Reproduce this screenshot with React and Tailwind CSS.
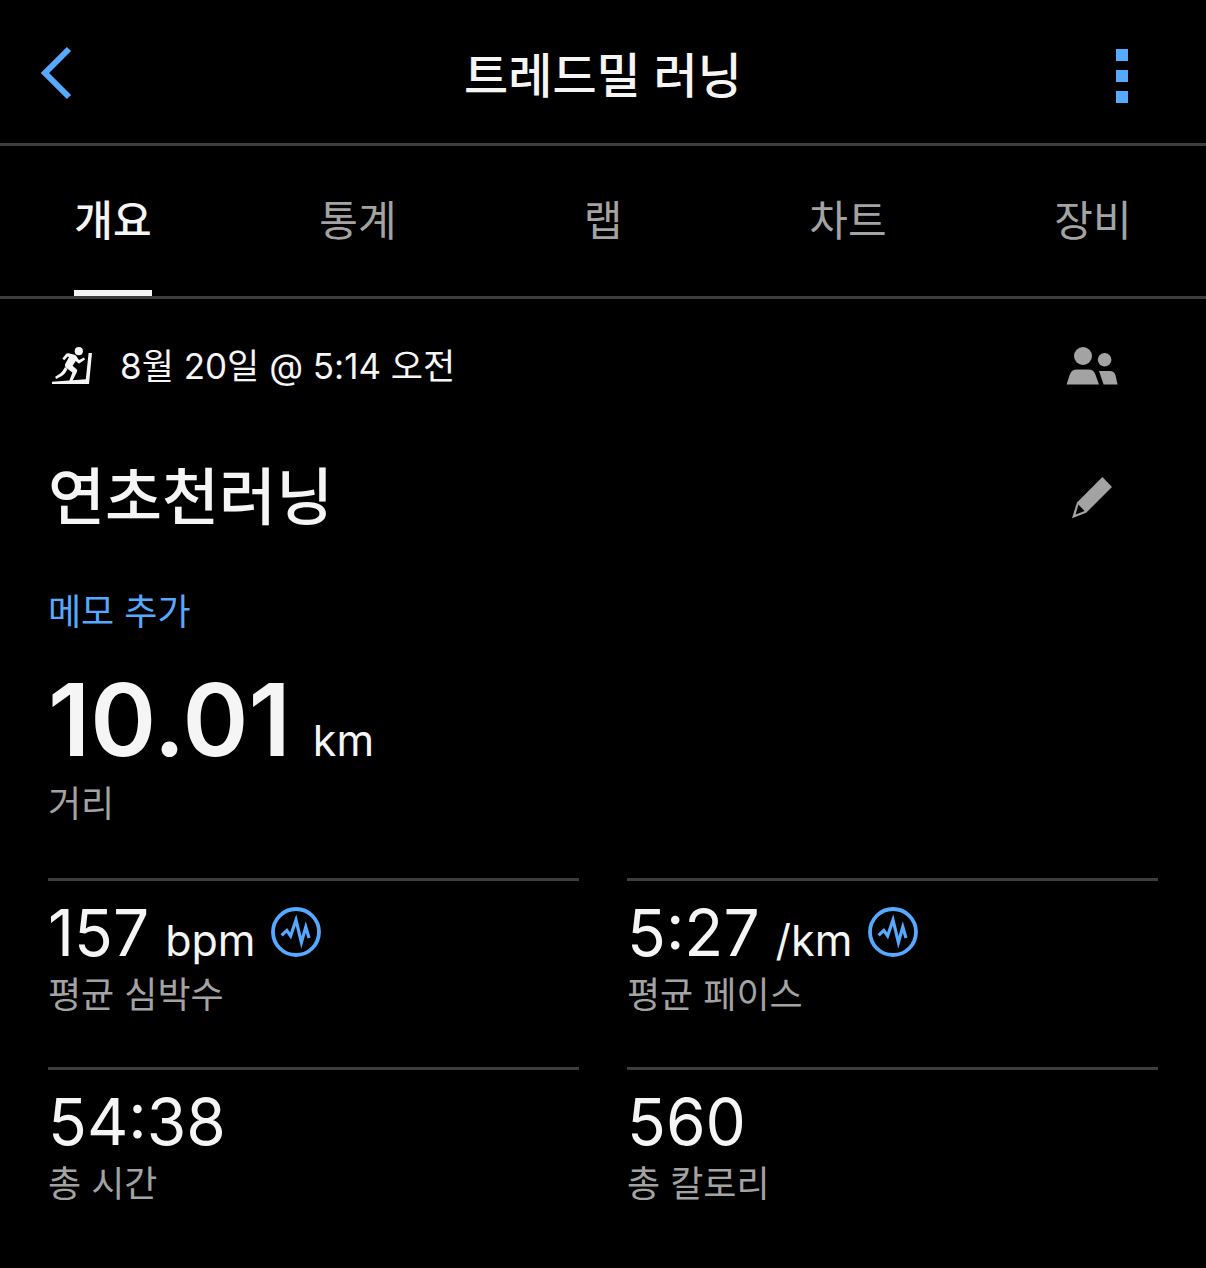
import React, { useState } from 'react';

const TABS = ['개요', '통계', '랩', '차트', '장비'];

const STATS = [
  { id: 'hr', value: '157', unit: 'bpm', label: '평균 심박수', chart: true },
  { id: 'pace', value: '5:27', unit: '/km', label: '평균 페이스', chart: true },
  { id: 'time', value: '54:38', label: '총 시간' },
  { id: 'calories', value: '560', label: '총 칼로리' },
];

const BackIcon = () => (
  <svg width="32" height="60" viewBox="0 0 32 60" fill="none" stroke="currentColor" strokeWidth="6">
    <path d="M29 3 L5 27 L29 51" />
  </svg>
);

const MoreIcon = () => (
  <svg width="12" height="54" viewBox="0 0 12 54" fill="currentColor">
    <path d="M0 0h12v12H0zM0 21h12v12H0zM0 42h12v12H0z" />
  </svg>
);

const TreadmillIcon = () => (
  <svg width="40" height="38" viewBox="0 0 40 38" fill="currentColor">
    <circle cx="26.8" cy="4.2" r="4.1" />
    <path d="M36.6 6h3.4l-3 31H0v-2.2l33.8-2.6z" />
    <path d="M10.4 11.6 14.2 6.8 Q15 6 16.4 6.2 L22.6 7.8 Q24.4 8.6 25.2 10.4 L27 13 32 10.4 33 12.4 27.6 16.2 Q26.4 16.8 25.4 15.6 L23.8 14 20.6 18.8 24.6 22.2 Q25.6 23.4 25 24.8 L20.4 34 17.2 34 20.4 25.4 13.8 20.4 Q12.2 18.8 13.2 17 L17 10 15.8 9.6 12.2 13.2z" />
    <path d="M13 20 15.4 22 Q13.4 27 9.8 29 L4 32 3.2 29.8 8.2 26.4 Q11 24 13 20z" />
  </svg>
);

const PeopleIcon = () => (
  <svg width="52" height="38" viewBox="0 0 52 38" fill="currentColor">
    <circle cx="17" cy="9" r="9" />
    <circle cx="38.6" cy="12.8" r="6.8" />
    <path d="M0.6 37.6 4 27 Q6 22.6 11 22.6 H22 Q27.6 22.6 29.2 27 L33 37.6z" />
    <path d="M33 24H43.6 Q48.2 24 49.4 28 L51.6 37.6H37.6z" />
  </svg>
);

const PencilIcon = () => (
  <svg width="40" height="42" viewBox="0 0 40 42" fill="currentColor">
    <path fillRule="evenodd" d="M30.4 0 40 10 14.2 35.8 0 41.2 5 25.4zM6.4 27.4 3.6 37.6 12.6 34z" />
  </svg>
);

const ChartIcon = () => (
  <svg width="50" height="50" viewBox="0 0 50 50" fill="none" stroke="currentColor">
    <circle cx="25" cy="25" r="23" strokeWidth="3.8" />
    <path strokeWidth="3.2" d="M10.6 28.4 15.8 23.4 19.6 29 25 13 30.4 35.4 34.8 20 38 31" />
  </svg>
);

const Stat = ({ stat }) => (
  <div className="border-t-[3px] border-[#3d3d3d] h-[189px] pt-2">
    <div className="flex items-start">
      <p className="flex items-baseline gap-4 leading-[88px] h-[82px]">
        <span className="text-[64px]">{stat.value}</span>
        {stat.unit && <span className="text-[43px]">{stat.unit}</span>}
      </p>
      {stat.chart && (
        <button type="button" aria-label={`${stat.label} 차트`} className="ml-4 mt-[18px] text-[#55a9ff]">
          <ChartIcon />
        </button>
      )}
    </div>
    <p className="text-4xl leading-[48px] text-[#a3a3a3]">{stat.label}</p>
  </div>
);

const App = () => {
  const [activeTab, setActiveTab] = useState(TABS[0]);

  return (
    <div className="min-h-screen bg-black text-[#f5f5f5] font-['Inter','Noto_Sans_CJK_KR',sans-serif]">
      <header className="grid grid-cols-[1fr_auto_1fr] items-center h-[146px] px-10 pt-2 border-b-[3px] border-[#3d3d3d]">
        <button type="button" aria-label="뒤로" className="justify-self-start text-[#55a9ff]">
          <BackIcon />
        </button>
        <h1 className="text-5xl font-medium">트레드밀 러닝</h1>
        <button type="button" aria-label="더보기" className="justify-self-end px-[38px] text-[#55a9ff]">
          <MoreIcon />
        </button>
      </header>

      {/* Tabs */}
      <nav className="flex justify-between h-[153px] px-[74px] border-b-[3px] border-[#3d3d3d]">
        {TABS.map((tab) => (
          <button
            key={tab}
            type="button"
            onClick={() => setActiveTab(tab)}
            className={`w-[78px] pt-1 text-[42px] whitespace-nowrap border-b-[6px] ${
              tab === activeTab ? 'border-[#f5f5f5] font-medium' : 'border-transparent text-[#a3a3a3]'
            }`}
          >
            {tab}
          </button>
        ))}
      </nav>

      <main className="px-12">
        <div className="flex items-center justify-between pt-[41px] pr-10 pl-1">
          <p className="flex items-center gap-7 text-[35px] leading-[52px]">
            <TreadmillIcon />
            8월 20일 @ 5:14 오전
          </p>
          <button type="button" aria-label="공유 대상" className="text-[#a3a3a3]">
            <PeopleIcon />
          </button>
        </div>

        <div className="flex items-center justify-between mt-16 pr-[46px]">
          <h2 className="text-[62px] leading-[84px] font-medium">연초천러닝</h2>
          <button type="button" aria-label="이름 편집" className="text-[#a3a3a3]">
            <PencilIcon />
          </button>
        </div>

        <button type="button" className="block mt-12 text-4xl leading-[48px] text-[#55a9ff]">
          메모 추가
        </button>

        {/* Distance */}
        <p className="flex items-baseline gap-[22px] mt-6 leading-[120px] h-[120px]">
          <span className="text-[100px] font-semibold">10.01</span>
          <span className="text-[43px]">km</span>
        </p>
        <p className="text-4xl leading-[48px] text-[#a3a3a3]">거리</p>

        <section className="grid grid-cols-2 gap-x-12 mt-[50px]">
          {STATS.map((stat) => (
            <Stat key={stat.id} stat={stat} />
          ))}
        </section>
      </main>
    </div>
  );
};

export default App;
